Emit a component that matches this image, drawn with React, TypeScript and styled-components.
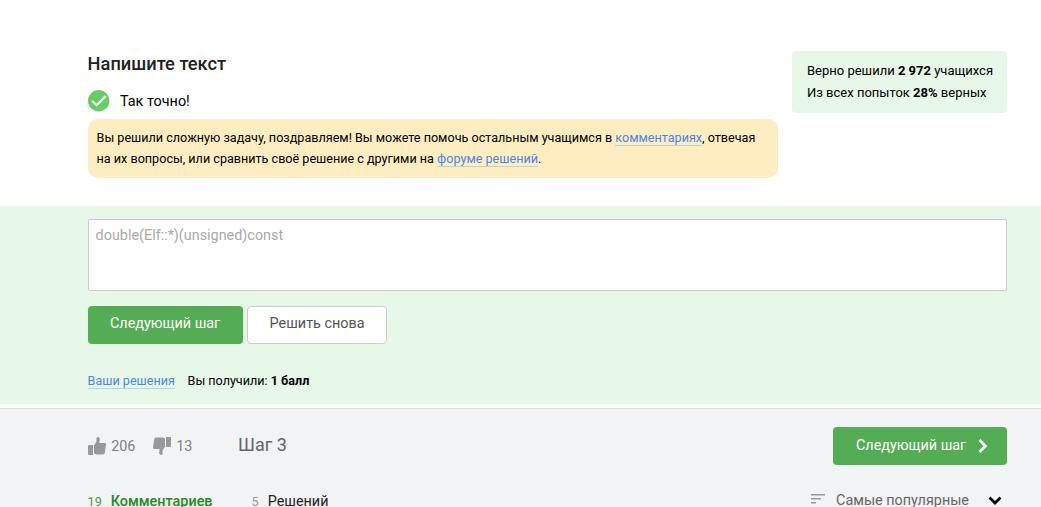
import React from "react";
import styled, { createGlobalStyle, css } from "styled-components";

const GlobalStyle = createGlobalStyle`
  *, *::before, *::after { box-sizing: border-box; }
  body {
    margin: 0;
    background: #fff;
    color: #000;
    font-family: Roboto, "Liberation Sans", sans-serif;
    font-size: 12.6px;
  }
`;

const Page = styled.div`
  height: 507px;
  overflow: hidden;
  display: flex;
  flex-direction: column;
`;

const Summary = styled.header`
  flex: none;
  height: 206px;
  padding: 51px 34px 0 87.6px;
  display: flex;
  justify-content: space-between;
  align-items: flex-start;
`;

const Feedback = styled.div`
  width: 690px;
`;

const Title = styled.h1`
  margin: 0;
  font-size: 18.27px;
  line-height: 26px;
  font-weight: 500;
  color: #222;
`;

const Verdict = styled.div`
  margin-top: 12px;
  display: flex;
  align-items: flex-start;
  gap: 10.4px;
  height: 23px;
  font-size: 14.4px;
  line-height: 26px;

  svg { display: block; margin-top: 1px; }
`;

const Hint = styled.p`
  margin: 7px 0 0;
  height: 59px;
  padding: 8px 9px;
  border-radius: 10px;
  background: #ffedc2;
  line-height: 21px;
`;

const Link = styled.a`
  color: #4a86e8;
  text-decoration: none;
  border-bottom: 1px solid rgba(117, 185, 232, 0.5);
`;

const Stats = styled.aside`
  width: 215px;
  height: 62px;
  padding: 9px 0 0 15px;
  border-radius: 4px;
  background: #e7f8e9;
  font-size: 13px;
  line-height: 22px;
  white-space: nowrap;
`;

const Attempt = styled.section`
  flex: none;
  height: 198px;
  padding: 13px 34px 0 87.6px;
  background: #e7f8e9;
`;

const Answer = styled.div`
  height: 72px;
  padding: 5px 7px;
  border: 1px solid #ccc;
  border-radius: 2px;
  background: #fff;
  color: #a9a9a9;
  font-size: 14.4px;
  line-height: 21px;
`;

const Actions = styled.div`
  display: flex;
  gap: 4px;
  margin-top: 15px;
`;

const Button = styled.button<{ $width: number; $outlined?: boolean }>`
  width: ${(p) => p.$width}px;
  height: 38px;
  padding: 0 0 3px;
  display: flex;
  align-items: center;
  justify-content: center;
  border: 0;
  border-radius: 4px;
  background: #54ad54;
  color: #fff;
  font: 14.4px Roboto, sans-serif;

  ${(p) =>
    p.$outlined &&
    css`
      padding-left: 1px;
      border: 1px solid #ccc;
      background: #fff;
      color: #555;
    `}
`;

const NextButton = styled(Button)`
  justify-content: flex-start;
  gap: 12px;
  padding: 0 0 1px 23px;

  svg { display: block; margin-top: 1px; }
`;

const Score = styled.div`
  display: flex;
  gap: 12.6px;
  margin-top: 29px;
  line-height: 15px;
`;

const Footer = styled.footer`
  flex: none;
  height: 99px;
  margin-top: 4px;
  padding: 18px 34px 0 87.6px;
  border-top: 1px solid #ddd;
  background: #f2f3f5;
`;

const StepBar = styled.div`
  display: flex;
  align-items: center;
  height: 38px;
`;

const Vote = styled.span<{ $width: number }>`
  width: ${(p) => p.$width}px;
  display: flex;
  align-items: center;
  gap: 5.6px;
  color: #808080;
  font-size: 14.4px;

  svg { display: block; margin-bottom: 1px; }
`;

const StepName = styled.span`
  flex: 1;
  color: #666;
  font-size: 18px;
  line-height: 22px;
  padding-bottom: 2px;
`;

const TabBar = styled.div`
  display: flex;
  align-items: flex-start;
  margin-top: 26px;
`;

const Tab = styled.span<{ $active?: boolean; $width?: number }>`
  display: flex;
  align-items: baseline;
  gap: 9px;
  width: ${(p) => (p.$width ? `${p.$width}px` : "auto")};
  font-size: 14.4px;
  line-height: 21px;
  font-weight: ${(p) => (p.$active ? 500 : 400)};
  color: ${(p) => (p.$active ? "#228b22" : "#222")};
`;

const Count = styled.span<{ $active?: boolean }>`
  font-size: 12.6px;
  font-weight: 400;
  color: ${(p) => (p.$active ? "#3f9d43" : "#999")};
`;

const Sort = styled.span`
  display: flex;
  align-items: center;
  margin-left: auto;
  padding-right: 5px;
  color: #666;
  font-size: 14.4px;
  line-height: 20px;

  svg { display: block; }
  svg:first-child { margin-bottom: 4px; }
`;

const SortLabel = styled.span`
  margin: 0 19px 0 11.4px;
`;

const ThumbUp = () => (
  <svg width="18" height="18" viewBox="0 0 18 18" fill="#999">
    <path d="M1 8h4v10H1a1 1 0 0 1-1-1V9a1 1 0 0 1 1-1z" />
    <path d="M6 8.200 8.400 4.800V1.600Q8.600 0 9.800 0q2 0 2 2.200L11.400 6H16.600q1.500 0 1.400 1.400l-1.200 8.400Q16.500 17.500 15 17.500H8L6 16.500z" />
  </svg>
);

const ThumbDown = () => (
  <svg width="18" height="18" viewBox="0 0 18 18" fill="#999">
    <path d="M13 0h4a1 1 0 0 1 1 1v8a1 1 0 0 1-1 1h-4z" />
    <path d="M12 1.500v8.300L9.600 13.200v3.200Q9.400 18 8.200 18q-2 0-2-2.200L6.600 12H1.400Q-.1 12 0 10.600L1.200 2.200Q1.500.5 3 .5H10z" />
  </svg>
);

export default function App() {
  return (
    <Page>
      <GlobalStyle />
      <Summary>
        <Feedback>
          <Title>Напишите текст</Title>
          <Verdict>
            <svg width="22" height="22" viewBox="0 0 22 22">
              <circle cx="10.700" cy="10.700" r="10.700" fill="#66cc66" />
              <path d="M4.200 10.900l4.500 4.300 9-9.300" fill="none" stroke="#fff" strokeWidth="2.200" />
            </svg>
            Так точно!
          </Verdict>
          <Hint>
            Вы решили сложную задачу, поздравляем! Вы можете помочь остальным учащимся в{" "}
            <Link>комментариях</Link>, отвечая на их вопросы, или сравнить своё решение с другими на{" "}
            <Link>форуме решений</Link>.
          </Hint>
        </Feedback>
        <Stats>
          <div>Верно решили <b>2 972</b> учащихся</div>
          <div>Из всех попыток <b>28%</b> верных</div>
        </Stats>
      </Summary>

      <Attempt>
        <Answer>double(Elf::*)(unsigned)const</Answer>
        <Actions>
          <Button $width={155}>Следующий шаг</Button>
          <Button $width={140} $outlined>Решить снова</Button>
        </Actions>
        <Score>
          <Link>Ваши решения</Link>
          <span>Вы получили: <b>1 балл</b></span>
        </Score>
      </Attempt>

      <Footer>
        <StepBar>
          <Vote $width={65}><ThumbUp />206</Vote>
          <Vote $width={85.4}><ThumbDown />13</Vote>
          <StepName>Шаг 3</StepName>
          <NextButton $width={174}>
            Следующий шаг
            <svg width="10" height="14" viewBox="0 0 10 14">
              <path d="M1.500 1l6 6-6 6" fill="none" stroke="#fff" strokeWidth="2.600" />
            </svg>
          </NextButton>
        </StepBar>
        <TabBar>
          <Tab $active $width={164}><Count $active>19</Count>Комментариев</Tab>
          <Tab><Count>5</Count>Решений</Tab>
          <Sort>
            <svg width="14" height="10" viewBox="0 0 14 10" fill="#999">
              <path d="M0 0h14v1.500H0zM0 4h10v1.500H0zM0 8h5v1.500H0z" />
            </svg>
            <SortLabel>Самые популярные</SortLabel>
            <svg width="14" height="10" viewBox="0 0 14 10">
              <path d="M1.500 1.500L7 7l5.500-5.500" fill="none" stroke="#000" strokeWidth="2.800" />
            </svg>
          </Sort>
        </TabBar>
      </Footer>
    </Page>
  );
}
